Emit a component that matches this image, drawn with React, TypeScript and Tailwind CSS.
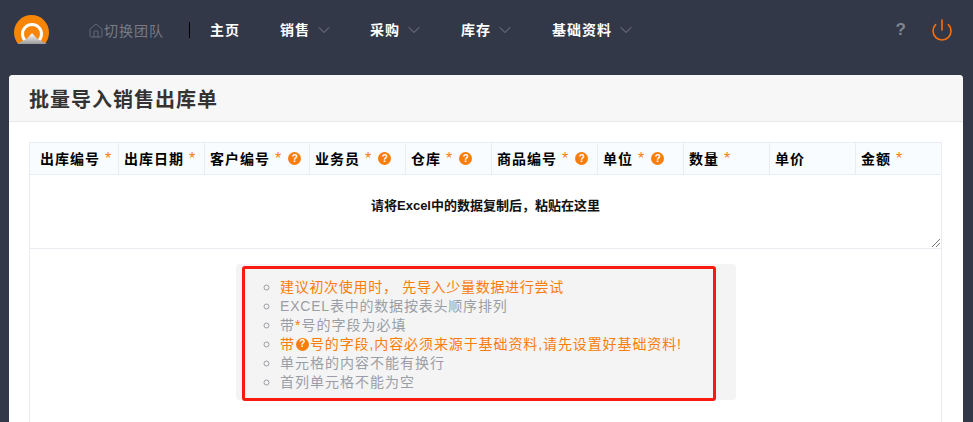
import { ChevronDown, House, Power } from 'lucide-react';

const font = "font-['Liberation_Sans','Noto_Sans_CJK_SC',sans-serif]";

const navItems = [
  { label: '主页', width: 'w-[70px]' },
  { label: '销售', width: 'w-[90px]', arrow: true },
  { label: '采购', width: 'w-[91px]', arrow: true },
  { label: '库存', width: 'w-[91px]', arrow: true },
  { label: '基础资料', width: 'w-[100px]', arrow: true },
];

const columns = [
  { label: '出库编号', star: true, width: 'w-[89px] pl-[10px]' },
  { label: '出库日期', star: true, width: 'w-[86px] pl-[5px]' },
  { label: '客户编号', star: true, help: true, width: 'w-[105px] pl-[5px]' },
  { label: '业务员', star: true, help: true, width: 'w-[96px] pl-[5px]' },
  { label: '仓库', star: true, help: true, width: 'w-[86px] pl-[5px]' },
  { label: '商品编号', star: true, help: true, width: 'w-[106px] pl-[5px]' },
  { label: '单位', star: true, help: true, width: 'w-[86px] pl-[5px]' },
  { label: '数量', star: true, width: 'w-[86px] pl-[5px]' },
  { label: '单价', width: 'w-[86px] pl-[5px]' },
  { label: '金额', star: true, width: 'w-[85px] pl-[5px]' },
];

function HelpDot({ className = '' }: { className?: string }) {
  return (
    <span className={`inline-flex h-[13px] w-[13px] items-center justify-center rounded-full bg-[#f97d0b] text-[10px] font-bold leading-none tracking-normal text-white ${className}`}>
      ?
    </span>
  );
}

function Logo() {
  return (
    <svg width="36" height="30" viewBox="0 0 36 30" className="shrink-0">
      <defs>
        <linearGradient id="hill" x1="0" y1="0" x2="0" y2="1">
          <stop offset="0" stopColor="#ffffff" />
          <stop offset="1" stopColor="#9a9a9a" />
        </linearGradient>
        <clipPath id="cut">
          <rect x="0" y="0" width="36" height="29" />
        </clipPath>
      </defs>
      <g clipPath="url(#cut)">
        <circle cx="17.5" cy="17.5" r="17.5" fill="#f98506" />
        <circle cx="18" cy="19" r="9.5" fill="none" stroke="#ffffff" strokeWidth="3" />
        <path d="M3 29 L13 23.5 L18 18 L23 23.5 L33 29 Z" fill="url(#hill)" />
      </g>
    </svg>
  );
}

export default function App() {
  return (
    <div className={`h-[422px] overflow-hidden bg-[#323847] ${font}`}>
      <header className="flex h-[75px] items-start pl-[14px] pt-[15px]">
        <Logo />
        <div className="ml-[38px] mt-[6px] flex w-[101px] items-center text-sm leading-5 tracking-[1px] text-[#777b86]">
          <House size={16} strokeWidth={1.1} />
          切换团队
        </div>
        <div className="mt-[7px] h-4 w-px bg-black" />
        <nav className="ml-5 mt-[5px] flex">
          {navItems.map((item) => (
            <div key={item.label} className={`flex items-center text-sm font-bold leading-5 tracking-[1px] text-white ${item.width}`}>
              {item.label}
              {item.arrow && <ChevronDown size={20} strokeWidth={1} className="ml-1 text-[#8a8e98]" />}
            </div>
          ))}
        </nav>
        <div className="ml-auto mt-[3px] flex items-center">
          <span className="text-[17px] font-bold leading-5 text-[#7e8490]">?</span>
          <Power size={24} strokeWidth={1.6} className="ml-6 mr-[19px] text-[#f5700f]" />
        </div>
      </header>

      <main className="ml-[9px] w-[954px] rounded-t-[4px] bg-white">
        <div className="flex h-[47px] items-center rounded-t-[4px] border-b border-[#e7e8ec] bg-[#f7f7f7] pl-5 pt-[3px]">
          <h1 className="text-xl font-bold tracking-[1px] text-[#333333]">批量导入销售出库单</h1>
        </div>

        <div className="px-5 pt-5">
          <div className="w-[913px] border border-[#e9edf2]">
            <div className="flex h-[32px] border-b border-[#e9edf2] bg-[#f8fcff]">
              {columns.map((col, i) => (
                <div
                  key={col.label}
                  className={`flex shrink-0 items-center text-sm font-bold tracking-[1px] text-black ${col.width} ${i < columns.length - 1 ? 'border-r border-[#e9edf2]' : ''}`}
                >
                  <span className="whitespace-nowrap">{col.label}</span>
                  {col.star && <span className="ml-[5px] text-base font-normal leading-none text-[#f97d0b]">*</span>}
                  {col.help && <HelpDot className="ml-[6px]" />}
                </div>
              ))}
            </div>
            <div className="relative flex h-[73px] items-start justify-center pt-[21px] text-[13px] font-bold text-[#111111]">
              请将Excel中的数据复制后，粘贴在这里
              <svg width="10" height="10" viewBox="0 0 10 10" className="absolute bottom-0 right-0 text-[#777777]">
                <path d="M1 9 L9 1 M5 9 L9 5" stroke="currentColor" strokeWidth="1" />
              </svg>
            </div>
          </div>

          <div className="h-[173px] w-[913px] border-x border-[#e9edf2] pt-[15px]">
            <div className="relative ml-[206px] h-[136px] w-[500px] rounded-[4px] bg-[#f4f4f4] pl-[26px] pt-[13px] text-sm leading-[19px] text-[#9a9ea6]">
              <ul className="list-[circle] pl-[18px] marker:text-[16px] marker:text-[#9a9da3]">
                <li className="h-[19px] tracking-[0.7px] text-[#f97d0b]">建议初次使用时， 先导入少量数据进行尝试</li>
                <li className="h-[19px] tracking-[0.8px]">EXCEL表中的数据按表头顺序排列</li>
                <li className="h-[19px] tracking-[1px]">
                  带<span className="text-[#f97d0b]">*</span>号的字段为必填
                </li>
                <li className="h-[19px] tracking-[0.9px] text-[#f97d0b]">
                  带<HelpDot className="mx-[1px] align-[2px]" />号的字段,内容必须来源于基础资料,请先设置好基础资料!
                </li>
                <li className="h-[19px] tracking-[1px]">单元格的内容不能有换行</li>
                <li className="h-[19px] tracking-[1px]">首列单元格不能为空</li>
              </ul>
              <div className="absolute left-[6px] top-[2px] h-[135px] w-[474px] rounded-[3px] border-[3px] border-[#fb1a10]" />
            </div>
          </div>
        </div>
      </main>
    </div>
  );
}
